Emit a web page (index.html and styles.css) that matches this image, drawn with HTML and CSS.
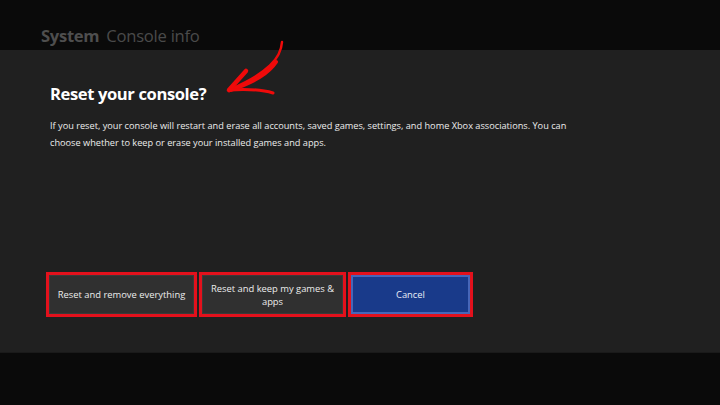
FILE: index.html
```html
<!DOCTYPE html>
<html>
<head>
<meta charset="utf-8">
<link rel="stylesheet" href="styles.css">
</head>
<body>
<div class="screen">
  <header class="topbar">
    <span class="crumb-main">System</span>
    <span class="crumb-sub">Console info</span>
  </header>
  <main class="panel">
    <h1 class="heading">Reset your console?</h1>
    <p class="desc">If you reset, your console will restart and erase all accounts, saved games, settings, and home Xbox associations. You can choose whether to keep or erase your installed games and apps.</p>
    <div class="actions">
      <div class="mark mark-a"><button class="btn">Reset and remove everything</button></div>
      <div class="mark mark-b"><button class="btn">Reset and keep my games &amp; apps</button></div>
      <div class="mark mark-c"><button class="btn btn-primary">Cancel</button></div>
    </div>
  </main>
  <svg class="arrow" width="720" height="405" viewBox="0 0 720 405">
    <path d="M282 42 C 281 58, 268 73, 231 89" fill="none" stroke="#f00a0a" stroke-width="2.5" stroke-linecap="round"/>
    <path d="M276 62 C 268 74, 255 81, 231 90" fill="none" stroke="#f00a0a" stroke-width="4" stroke-linecap="round"/>
    <path d="M229 90 L 246 71" fill="none" stroke="#f00a0a" stroke-width="4.5" stroke-linecap="round"/>
    <path d="M229 90 C 245 89, 260 89, 273 93" fill="none" stroke="#f00a0a" stroke-width="3" stroke-linecap="round"/>
  </svg>
</div>
</body>
</html>
```
FILE: styles.css
```css
html, body {
  margin: 0;
  padding: 0;
  background: #0a0a0a;
}
.screen {
  position: relative;
  width: 720px;
  height: 405px;
  overflow: hidden;
  font-family: "Open Sans", "Noto Sans", sans-serif;
  background: #0a0a0a;
}
.topbar {
  height: 50px;
  box-sizing: border-box;
  padding: 25px 0 0 41px;
  font-size: 16.6px;
  line-height: 22px;
  display: flex;
  gap: 7px;
}
.crumb-main {
  font-weight: 700;
  color: #4e4e4e;
  letter-spacing: -0.3px;
}
.crumb-sub {
  color: #4a4a4a;
  letter-spacing: -0.25px;
}
.panel {
  height: 303px;
  box-sizing: border-box;
  background: #202020;
  border-bottom: 1px solid #1a1a1a;
  padding: 33px 0 0 50px;
  display: flex;
  flex-direction: column;
}
.heading {
  margin: 0;
  font-size: 16.6px;
  line-height: 22px;
  font-weight: 700;
  color: #ffffff;
  letter-spacing: -0.4px;
}
.desc {
  margin: 12px 0 0 0;
  width: 530px;
  font-size: 9.2px;
  line-height: 17px;
  color: #ededed;
}
.actions {
  margin: auto 0 35px -4px;
  display: flex;
  gap: 2px;
}
.mark {
  border: 3px solid #e3111c;
  height: 39px;
  display: flex;
}
.mark-a { width: 145px; }
.mark-b { width: 141px; }
.mark-c { width: 119px; }
.btn {
  flex: 1;
  margin: 0;
  border: 1px solid #3a3a3a;
  background: #303030;
  color: #ececec;
  font-family: "Open Sans", "Noto Sans", sans-serif;
  font-size: 9.4px;
  line-height: 13px;
  padding: 0 4px;
  text-align: center;
}
.btn-primary {
  background: #193a8a;
  border: 2px solid #4766b8;
  color: #e8ecf6;
}
.arrow {
  position: absolute;
  left: 0;
  top: 0;
  pointer-events: none;
}
```
